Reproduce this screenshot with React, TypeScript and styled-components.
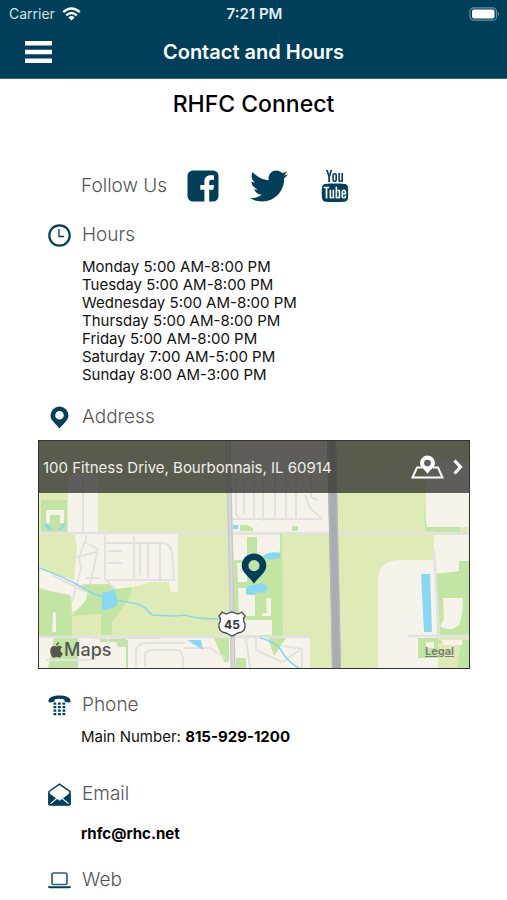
import React from "react";
import styled, { createGlobalStyle } from "styled-components";
import { FaTwitter } from "react-icons/fa";
import { TfiYoutube } from "react-icons/tfi";

const navy = "#003f5a";

const GlobalStyle = createGlobalStyle`
  *, *::before, *::after { box-sizing: border-box; }
  body {
    margin: 0;
    background: #fff;
    color: #111;
    font-family: Inter, "Liberation Sans", sans-serif;
    font-size: 15px;
  }
  h1, h2, h3, p, ul { margin: 0; padding: 0; }
  ul { list-style: none; }
  svg { display: block; }
`;

const Screen = styled.div`
  min-height: 100vh;
  overflow: hidden;
`;

const Header = styled.header`
  background: ${navy};
  color: #fff;
  border-bottom: 1px solid #2f6a80;
`;

const StatusBar = styled.div`
  display: grid;
  grid-template-columns: 1fr auto 1fr;
  align-items: center;
  height: 27px;
  padding: 0 7px 0 9px;
  line-height: 18px;
`;

const Carrier = styled.span`
  display: flex;
  align-items: center;
  gap: 7px;
  font-size: 14px;
  color: #d3e0e6;
`;

const Time = styled.time`
  font-weight: 600;
  color: #e4edf1;
`;

const Battery = styled.span`
  justify-self: end;
`;

const NavBar = styled.nav`
  display: grid;
  grid-template-columns: 60px 1fr 60px;
  align-items: center;
  height: 51px;
  padding: 0 16px 2px;
`;

const MenuButton = styled.button`
  display: flex;
  padding: 9px;
  border: 0;
  background: none;
  color: #fff;
  cursor: pointer;
`;

const NavTitle = styled.h1`
  font-size: 20px;
  line-height: 24px;
  font-weight: 600;
  text-align: center;
`;

const ClubName = styled.h2`
  padding-top: 10px;
  font-size: 23px;
  line-height: 30px;
  font-weight: 500;
  color: #000;
  text-align: center;
`;

const Social = styled.section`
  display: flex;
  align-items: center;
  margin-top: 45px;
  padding-left: 81px;
  height: 44px;
`;

const Label = styled.h3`
  font-size: 19px;
  line-height: 24px;
  font-weight: 300;
  color: #555;
`;

const SocialLinks = styled.div`
  display: flex;
  align-items: center;
  gap: 26px;
  margin-left: 16px;
`;

const SocialLink = styled.a`
  display: grid;
  place-items: center;
  width: 40px;
  height: 40px;
  color: ${navy};
`;

const Section = styled.section<{ $gap: number }>`
  margin-top: ${(p) => p.$gap}px;
`;

const SectionHead = styled.div`
  display: flex;
  align-items: center;
  gap: 11px;
  padding-left: 48px;
  color: ${navy};
`;

const HoursList = styled.ul`
  padding: 11px 0 0 82px;
  line-height: 18px;
`;

const Line = styled.p<{ $top: number }>`
  padding: ${(p) => p.$top}px 0 0 81px;
  line-height: 18px;
`;

const StrongLink = styled.a`
  color: #000;
  font-weight: 700;
  text-decoration: none;
`;

const MapCard = styled.div`
  position: relative;
  margin: 11px 37px 0 38px;
  border: 1px solid #333;
  background: #dfeab5;
`;

const MapBanner = styled.a`
  position: absolute;
  inset: 0 0 auto;
  display: flex;
  align-items: center;
  height: 52px;
  padding: 0 6px 0 4px;
  background: rgba(48, 48, 45, 0.77);
  color: #efefea;
  text-decoration: none;
`;

const BannerIcons = styled.span`
  display: flex;
  align-items: center;
  gap: 9px;
  margin-left: auto;
  color: #fff;
`;

const MapsMark = styled.span`
  position: absolute;
  left: 11px;
  bottom: 7px;
  display: flex;
  align-items: center;
  gap: 1px;
  font-size: 18px;
  line-height: 22px;
  font-weight: 500;
  color: #555850;
`;

const Legal = styled.a`
  position: absolute;
  right: 15px;
  bottom: 10px;
  font-size: 11px;
  line-height: 14px;
  font-weight: 700;
  color: #7e7f74;
`;

const Wifi = () => (
  <svg width="19" height="14" viewBox="0 0 19 14" fill="none" stroke="#fff" strokeWidth="2.4">
    <path d="M1.2 5.2Q9.5-2.3 17.8 5.2M4.2 8.3Q9.5 3.5 14.8 8.3" />
    <path d="M6.4 10.4Q9.5 7.8 12.6 10.4L9.5 13.6Z" fill="#fff" stroke="none" />
  </svg>
);

const BatteryIcon = () => (
  <svg width="31" height="14" viewBox="0 0 31 14">
    <rect x="1" y="0.8" width="26.5" height="12.4" rx="3.8" fill="none" stroke="#6d8fa0" strokeWidth="1.2" />
    <rect x="3" y="2.6" width="22.5" height="8.8" rx="2" fill="#fff" />
    <path d="M29 4.8Q31 7 29 9.2Z" fill="#6d8fa0" />
  </svg>
);

const MenuIcon = () => (
  <svg width="27" height="22" viewBox="0 0 27 22" fill="currentColor">
    <path d="M0 0h27v4.5H0zM0 8.800h27v4.400H0zM0 17.500h27V22H0z" />
  </svg>
);

const FacebookIcon = () => (
  <svg width="32" height="32" viewBox="0 0 32 32" fill="currentColor">
    <path d="M6 .5H26A5.500 5.500 0 0 1 31.500 6V26A5.500 5.500 0 0 1 26 31.500H22.200V19.800H26.300L27 15H22.200V12.200C22.200 10.500 23 9.700 24.800 9.700H27V5.500C26 5.300 24.800 5.200 23.600 5.200 19.700 5.200 17.400 7.500 17.400 11.600V15H13.300V19.800H17.400V31.500H6A5.500 5.500 0 0 1 .5 26V6A5.500 5.500 0 0 1 6 .5Z" />
  </svg>
);

const ClockIcon = () => (
  <svg width="23" height="23" viewBox="0 0 23 23" fill="none" stroke="currentColor">
    <circle cx="11.5" cy="11.5" r="10.2" strokeWidth="2.2" />
    <path d="M11 5v7.500h5" strokeWidth="1.3" />
  </svg>
);

const PinIcon = () => (
  <svg width="23" height="23" viewBox="0 0 23 23" fill="currentColor">
    <path
      fillRule="evenodd"
      d="M11.500.5a9 9 0 0 1 9 9c0 4.800-5.500 8.500-9 13-3.500-4.500-9-8.200-9-13a9 9 0 0 1 9-9Zm0 4.500a4.300 4.300 0 1 0 0 8.600 4.300 4.300 0 0 0 0-8.600Z"
    />
  </svg>
);

const PhoneIcon = () => (
  <svg width="23" height="21" viewBox="0 0 23 21" fill="currentColor">
    <path d="M.5 5.300C1 2.500 5.500.6 11.500.6s10.500 1.900 11 4.700c.2 1.500-.4 2.300-1.500 2.200l-3.200-.5c-1.100-.2-1.500-.9-1.500-2.600-2.700-.8-6.900-.8-9.600 0 0 1.700-.4 2.400-1.500 2.600L2 7.500C.9 7.600.3 6.800.5 5.300Z" />
    {[5.500, 10, 14.500].map((x) =>
      [7.500, 11, 14.500, 18].map((y) => <rect key={`${x}-${y}`} x={x} y={y} width="2.800" height="2.200" rx="0.500" />)
    )}
  </svg>
);

const MailIcon = () => (
  <svg width="23" height="23" viewBox="0 0 23 23">
    <path d="M1 8.500 11.500 1.200 22 8.500V21.500H1Z" fill="#fff" stroke="currentColor" strokeWidth="1.500" />
    <path d="M.3 9.500 8 15.200.3 22ZM22.700 9.500 15 15.200 22.700 22ZM1 22.700 9 16l2.500 1.700L14 16l8 6.700Z" fill="currentColor" />
  </svg>
);

const LaptopIcon = () => (
  <svg width="23" height="17" viewBox="0 0 23 17" fill="none" stroke="#2e6077">
    <rect x="4" y="1" width="15" height="11.500" rx="1.500" strokeWidth="1.700" />
    <path d="M0 14.300h23v.7q-.5 1.300-2 1.300H2Q.5 16.300 0 15Z" fill={navy} stroke="none" />
  </svg>
);

const DirectionsIcon = () => (
  <svg width="33" height="24" viewBox="0 0 33 24" fill="none" stroke="currentColor">
    <path d="M11 12.500H6L1.500 22.500h30L27 12.500h-5" strokeWidth="2" />
    <path
      fillRule="evenodd"
      d="M16.500.5a7.500 7.500 0 0 1 7.500 7.500c0 4-4.500 6.400-7.500 10.800-3-4.400-7.500-6.800-7.500-10.800a7.500 7.500 0 0 1 7.500-7.500Zm0 4.200a3.300 3.300 0 1 0 0 6.600 3.300 3.300 0 0 0 0-6.600Z"
      fill="currentColor"
      stroke="none"
    />
  </svg>
);

const ChevronIcon = () => (
  <svg width="10" height="16" viewBox="0 0 10 16" fill="none" stroke="currentColor" strokeWidth="3.200">
    <path d="m1.500 1.500 6 6.500-6 6.500" />
  </svg>
);

const AppleIcon = () => (
  <svg width="13" height="16" viewBox="0 0 13 16" fill="currentColor">
    <path d="M9 0c.1 1.900-1.300 3.500-3 3.500C5.800 1.700 7.300.2 9 0ZM6.600 4.400C7.300 4.400 8.200 3.700 9.400 3.700c1.200 0 2.200.6 2.800 1.500-2.600 1.600-2.100 4.900.6 6-.6 1.800-2 4.500-3.600 4.500-1 0-1.400-.6-2.500-.6s-1.500.6-2.500.6C2.200 15.700.2 12 .2 8.900c0-3.200 2-5 3.800-5 1.100 0 1.900.5 2.600.5Z" />
  </svg>
);

const StreetMap = () => (
  <svg width="100%" viewBox="39 441 430 227" preserveAspectRatio="xMidYMid slice" role="img" aria-label="Map">
    <rect x="39" y="441" width="430" height="227" fill="#dfebb6" />
    <g fill="#f6f3eb">
      <path d="M68 474H98V532L178 534V592H171L169 582H150L138 586 112 590 108 584H83L89 591 85 605 72 612V597L40 588V569L74 580 77 550 75 534 68 531Z" />
      <path d="M231 441H327L329 533H231Z" />
      <path d="M426 461H469V527H426ZM434 535H469V573H434ZM378 668V578Q380 560 400 560H435L438 636V668Z" />
      <path d="M39 638H310V668H39ZM232 535H280V550L270 562H234Z" />
    </g>
    <g fill="#c3e5a3">
      <path d="M41 500H67V532H41ZM39 589 70 595 72 616H72V636H39ZM80 585 110 584 116 589 132 587 130 598 112 622V635H101V614L72 616 86 600 88 590Z" />
      <path d="M247 537H257V556H280V533H282L283 636H260L234 618V560H247ZM240 525H247L253 528V531H240ZM292 526H298V531H292ZM424 505 427 527H460V532H425Z" />
      <path d="M436 574 459 571V561H469V636H437ZM418 638H438V658H418ZM438 643H461L457 668H469V640H438ZM54 638H78V668H48ZM100 638H126V647H118L116 642H100ZM214 638H229V662H224ZM236 658H246V668H236ZM268 638H286L274 656ZM126 640H128V668H126Z" />
    </g>
    <g fill="#f6f3eb">
      <path d="M46 510H64V523H60V515H50V523H46ZM53 613Q56 610 56 616V632H52ZM443 598H463Q463 615 459 625 450 633 440 626L444 619ZM441 640H462V645H444Z" />
      <path d="M237 563H247V582H238ZM238 588H246V595H255V616H239ZM266 598H271V616H262V613H267ZM241 620H272V635H236ZM426 642H434V648H426Z" />
    </g>
    <g fill="none" stroke="#e4e2e1" strokeWidth="2">
      <path d="M83 478V532M85 541 79 557 81 568 72 602M86 536V543L98 549 90 584M105 535V579L114 588M76 557 96 552M105 543H164Q171 545 172 553L174 581M134 536V578M148 543V578M160 543V580M105 580H176M108 563H122M108 551H122M52 575 86 592M86 578H100M140 543V575" />
      <path d="M236 478V514L240 519H322M244 478V514M254 470V520M263 470V521M275 470V520M286 470V520M296 470V520M305 495 310 508 322 519M311 470V497L318 500M232 519H241M92 638H160M108 638V644M136 667V651Q138 642 148 643H185M145 667V655Q146 650 154 650H178Q184 651 183 668M184 648H210L226 658M246 638 250 668M256 638V650L282 662 300 650M284 646 302 649V668M46 660H90L104 650" />
    </g>
    <g fill="none" stroke="#e3e2e3" strokeWidth="2.500">
      <path d="M39 533H469M39 637H310M434 550 439 636M408 636H469" />
    </g>
    <path d="M228 441 231 560 233 668" fill="none" stroke="#c6c8ce" strokeWidth="5" />
    <path d="M228 441 231 560 233 668" fill="none" stroke="#d6d7dc" strokeWidth="2.500" />
    <path d="M327 441H336L341 668H332Z" fill="#a9acb2" />
    <path d="M328 441 332.500 668M335.500 441 340.500 668" stroke="#b7b9c0" strokeWidth="1.200" />
    <g fill="#87d9f3">
      <path d="M44 523Q46 531 53 530L49 525ZM58 530Q64 531 66 523L61 526ZM102 593 114 590 118 600 116 607 102 611ZM421 574H430L432 632H424Z" />
      <path d="M246 588Q251 584 256 585 262 581 267 586V591Q264 594 258 592 251 597 246 593ZM264 555Q271 551 280 553V558Q270 561 264 558ZM187 640H201L203 650ZM233 525H238V529H233Z" />
    </g>
    <g fill="none" stroke="#88d8ed" strokeWidth="1.600">
      <path d="M39 568Q65 577 83 588T108 596M116 600 138 604 145 608 152 615 174 616 186 615Q194 619 222 619M260 638Q278 642 284 655 291 664 299 668" />
    </g>
    <path
      d="M222 612 226 614 232 612 238 614 242 612 245 616Q242 619 245 624 246 632 238 633L232 636 226 633Q218 632 219 624 222 619 219 616Z"
      fill="#fff"
      stroke="#4b4c4c"
      strokeWidth="1.300"
    />
    <text x="232" y="629" textAnchor="middle" fontFamily="Inter, sans-serif" fontSize="12" fontWeight="700" fill="#333">
      45
    </text>
    <path
      fillRule="evenodd"
      d="M254 553.500a12.300 12.300 0 0 1 12.300 12.300c0 7.200-8 11-12.300 18-4.300-7-12.300-10.800-12.300-18A12.300 12.300 0 0 1 254 553.500Zm0 6.500a5.600 5.600 0 1 0 0 11.200 5.600 5.600 0 0 0 0-11.200Z"
      fill={navy}
    />
  </svg>
);

const hours = [
  "Monday 5:00 AM-8:00 PM",
  "Tuesday 5:00 AM-8:00 PM",
  "Wednesday 5:00 AM-8:00 PM",
  "Thursday 5:00 AM-8:00 PM",
  "Friday 5:00 AM-8:00 PM",
  "Saturday 7:00 AM-5:00 PM",
  "Sunday 8:00 AM-3:00 PM",
];

export default function App() {
  return (
    <Screen>
      <GlobalStyle />
      <Header>
        <StatusBar>
          <Carrier>
            Carrier <Wifi />
          </Carrier>
          <Time>7:21 PM</Time>
          <Battery>
            <BatteryIcon />
          </Battery>
        </StatusBar>
        <NavBar>
          <MenuButton type="button" aria-label="Menu">
            <MenuIcon />
          </MenuButton>
          <NavTitle>Contact and Hours</NavTitle>
        </NavBar>
      </Header>
      <main>
        <ClubName>RHFC Connect</ClubName>
        <Social>
          <Label>Follow Us</Label>
          <SocialLinks>
            <SocialLink href="#facebook" aria-label="Facebook">
              <FacebookIcon />
            </SocialLink>
            <SocialLink href="#twitter" aria-label="Twitter">
              <FaTwitter size={38} />
            </SocialLink>
            <SocialLink href="#youtube" aria-label="YouTube">
              <TfiYoutube size={32} />
            </SocialLink>
          </SocialLinks>
        </Social>
        <Section $gap={15}>
          <SectionHead>
            <ClockIcon />
            <Label>Hours</Label>
          </SectionHead>
          <HoursList>
            {hours.map((h) => (
              <li key={h}>{h}</li>
            ))}
          </HoursList>
        </Section>
        <Section $gap={21}>
          <SectionHead>
            <PinIcon />
            <Label>Address</Label>
          </SectionHead>
          <MapCard>
            <StreetMap />
            <MapBanner href="#directions">
              100 Fitness Drive, Bourbonnais, IL 60914
              <BannerIcons>
                <DirectionsIcon />
                <ChevronIcon />
              </BannerIcons>
            </MapBanner>
            <MapsMark>
              <AppleIcon />
              Maps
            </MapsMark>
            <Legal href="#legal">Legal</Legal>
          </MapCard>
        </Section>
        <Section $gap={24}>
          <SectionHead>
            <PhoneIcon />
            <Label>Phone</Label>
          </SectionHead>
          <Line $top={11}>
            Main Number: <StrongLink href="tel:815-929-1200">815-929-1200</StrongLink>
          </Line>
        </Section>
        <Section $gap={36}>
          <SectionHead>
            <MailIcon />
            <Label>Email</Label>
          </SectionHead>
          <Line $top={19}>
            <StrongLink href="mailto:rhfc@rhc.net">rhfc@rhc.net</StrongLink>
          </Line>
        </Section>
        <Section $gap={25}>
          <SectionHead>
            <LaptopIcon />
            <Label>Web</Label>
          </SectionHead>
        </Section>
      </main>
    </Screen>
  );
}
